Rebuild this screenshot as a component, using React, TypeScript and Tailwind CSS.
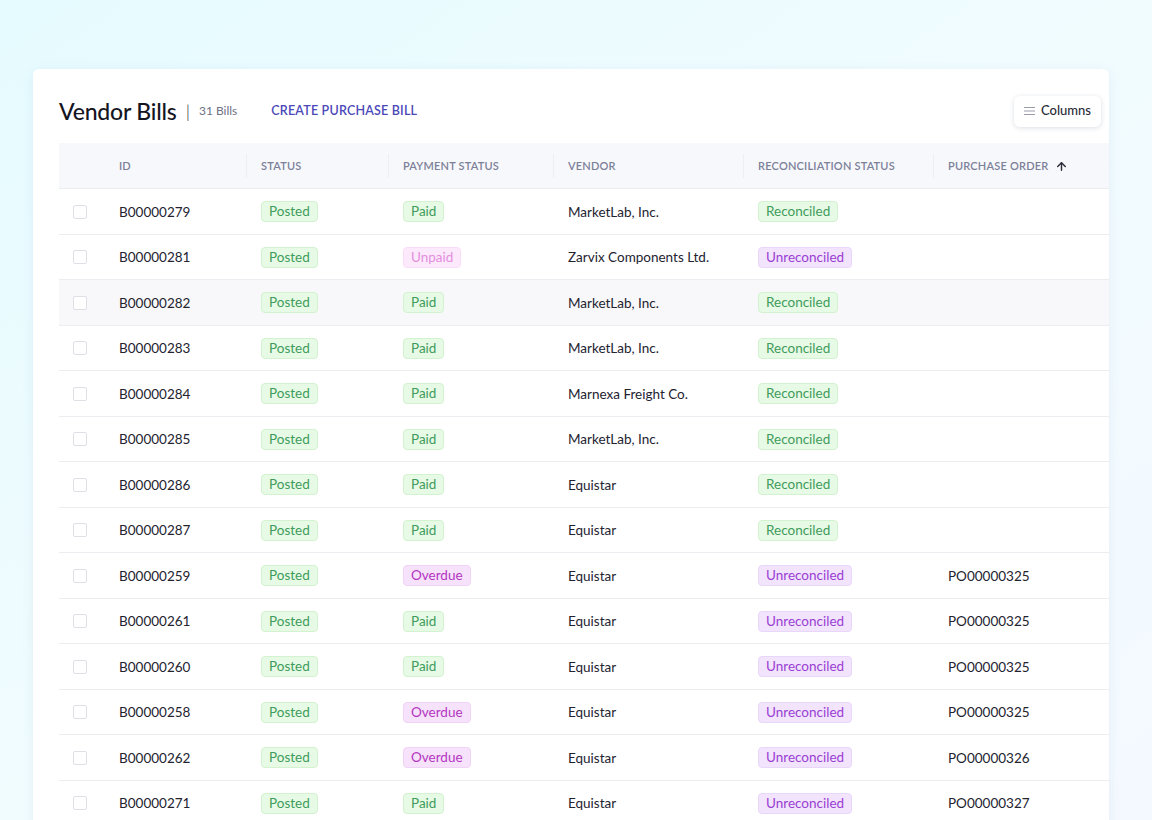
import { ArrowUp } from 'lucide-react'

type Tone = 'green' | 'pink' | 'magenta' | 'purple'

const TONES: Record<Tone, string> = {
  green: 'bg-[#e7fae5] border-[#d3f3d0] text-[#3f9c5c]',
  pink: 'bg-[#fde9fc] border-[#fbdcf8] text-[#e38fdc]',
  magenta: 'bg-[#f7e2fb] border-[#f0d3f6] text-[#b335c1]',
  purple: 'bg-[#f2e4fd] border-[#e9d6fb] text-[#9a3ed2]',
}

const PAY_TONE: Record<string, Tone> = { Paid: 'green', Unpaid: 'pink', Overdue: 'magenta' }

type Bill = {
  id: string
  pay: string
  vendor: string
  rec: 'Reconciled' | 'Unreconciled'
  po?: string
}

const BILLS: Bill[] = [
  { id: 'B00000279', pay: 'Paid', vendor: 'MarketLab, Inc.', rec: 'Reconciled' },
  { id: 'B00000281', pay: 'Unpaid', vendor: 'Zarvix Components Ltd.', rec: 'Unreconciled' },
  { id: 'B00000282', pay: 'Paid', vendor: 'MarketLab, Inc.', rec: 'Reconciled' },
  { id: 'B00000283', pay: 'Paid', vendor: 'MarketLab, Inc.', rec: 'Reconciled' },
  { id: 'B00000284', pay: 'Paid', vendor: 'Marnexa Freight Co.', rec: 'Reconciled' },
  { id: 'B00000285', pay: 'Paid', vendor: 'MarketLab, Inc.', rec: 'Reconciled' },
  { id: 'B00000286', pay: 'Paid', vendor: 'Equistar', rec: 'Reconciled' },
  { id: 'B00000287', pay: 'Paid', vendor: 'Equistar', rec: 'Reconciled' },
  { id: 'B00000259', pay: 'Overdue', vendor: 'Equistar', rec: 'Unreconciled', po: 'PO00000325' },
  { id: 'B00000261', pay: 'Paid', vendor: 'Equistar', rec: 'Unreconciled', po: 'PO00000325' },
  { id: 'B00000260', pay: 'Paid', vendor: 'Equistar', rec: 'Unreconciled', po: 'PO00000325' },
  { id: 'B00000258', pay: 'Overdue', vendor: 'Equistar', rec: 'Unreconciled', po: 'PO00000325' },
  { id: 'B00000262', pay: 'Overdue', vendor: 'Equistar', rec: 'Unreconciled', po: 'PO00000326' },
  { id: 'B00000271', pay: 'Paid', vendor: 'Equistar', rec: 'Unreconciled', po: 'PO00000327' },
]

function Badge({ tone, children }: { tone: Tone; children: string }) {
  return (
    <span className={`inline-flex h-[21px] items-center rounded-[4px] border px-[7px] text-[13.5px] leading-none ${TONES[tone]}`}>
      {children}
    </span>
  )
}

function HeadCell({ w, children, divider = true }: { w: string; children: React.ReactNode; divider?: boolean }) {
  return (
    <div className={`relative flex h-full shrink-0 items-center pl-[15px] pt-[1px] ${w}`}>
      {divider && <span className="absolute left-0 top-[11px] h-[24px] w-px bg-[#eeeff3]" />}
      {children}
    </div>
  )
}

export default function App() {
  return (
    <div
      className="h-[820px] overflow-hidden bg-gradient-to-br from-[#e6fbff] via-[#f1fcff] to-[#f4f9ff] pl-[33px] pt-[69px]"
      style={{ fontFamily: 'Lato, "Noto Sans", sans-serif' }}
    >
      <div className="h-[800px] w-[1076px] rounded-t-[6px] bg-white pl-[26px] pt-[26px] shadow-[0_2px_12px_rgba(90,120,170,0.10)]">
        <div className="flex h-[32px] items-center pr-[8px]">
          <h1 className="text-[23px] font-medium tracking-[-0.2px] text-[#15151f]">Vendor Bills</h1>
          <span className="ml-[9px] text-[18px] font-light text-[#2a2a38]">|</span>
          <span className="ml-[9px] text-[12px] text-[#6d7184]">31 Bills</span>
          <button className="ml-[34px] text-[12.5px] font-semibold tracking-[0.2px] text-[#4b48b8]">
            CREATE PURCHASE BILL
          </button>
          <button className="ml-auto flex h-[31px] items-center gap-[6px] rounded-[6px] bg-white px-[10px] text-[13px] font-medium text-[#2a2a38] shadow-[0_1px_5px_rgba(40,50,80,0.16)]">
            <svg width="11" height="10" viewBox="0 0 11 10" className="text-[#9a9cab]">
              <path d="M0 1.5h11M0 5h11M0 8.5h11" stroke="currentColor" strokeWidth="1.2" />
            </svg>
            Columns
          </button>
        </div>

        <div className="mt-[16px]">
          <div className="flex h-[45px] items-center bg-[#f7f8fb] text-[11px] font-semibold tracking-[0.2px] text-[#7c8099]">
            <div className="w-[45px] shrink-0" />
            <HeadCell w="w-[142px]" divider={false}>ID</HeadCell>
            <HeadCell w="w-[142px]">STATUS</HeadCell>
            <HeadCell w="w-[165px]">PAYMENT STATUS</HeadCell>
            <HeadCell w="w-[190px]">VENDOR</HeadCell>
            <HeadCell w="w-[190px]">RECONCILIATION STATUS</HeadCell>
            <HeadCell w="w-[176px]">
              <span>PURCHASE ORDER</span>
              <ArrowUp size={13} strokeWidth={2.6} className="ml-[7px] text-[#2a2a38]" />
            </HeadCell>
          </div>

          {BILLS.map((b, i) => (
            <div
              key={b.id}
              className={`flex h-[45.5px] items-center border-t border-[#ececf1] pt-[1px] text-[13.5px] text-[#23232f] ${i === 2 ? 'bg-[#f8f8fa]' : ''}`}
            >
              <div className="flex w-[45px] shrink-0 pl-[14px]">
                <span className="h-[14px] w-[14px] rounded-[2px] border border-[#dfe0e6] bg-white" />
              </div>
              <div className="w-[142px] shrink-0 pl-[15px]">{b.id}</div>
              <div className="w-[142px] shrink-0 pl-[15px]">
                <Badge tone="green">Posted</Badge>
              </div>
              <div className="w-[165px] shrink-0 pl-[15px]">
                <Badge tone={PAY_TONE[b.pay]}>{b.pay}</Badge>
              </div>
              <div className="w-[190px] shrink-0 pl-[15px]">{b.vendor}</div>
              <div className="w-[190px] shrink-0 pl-[15px]">
                <Badge tone={b.rec === 'Reconciled' ? 'green' : 'purple'}>{b.rec}</Badge>
              </div>
              <div className="w-[176px] shrink-0 pl-[15px]">{b.po ?? ''}</div>
            </div>
          ))}
        </div>
      </div>
    </div>
  )
}
